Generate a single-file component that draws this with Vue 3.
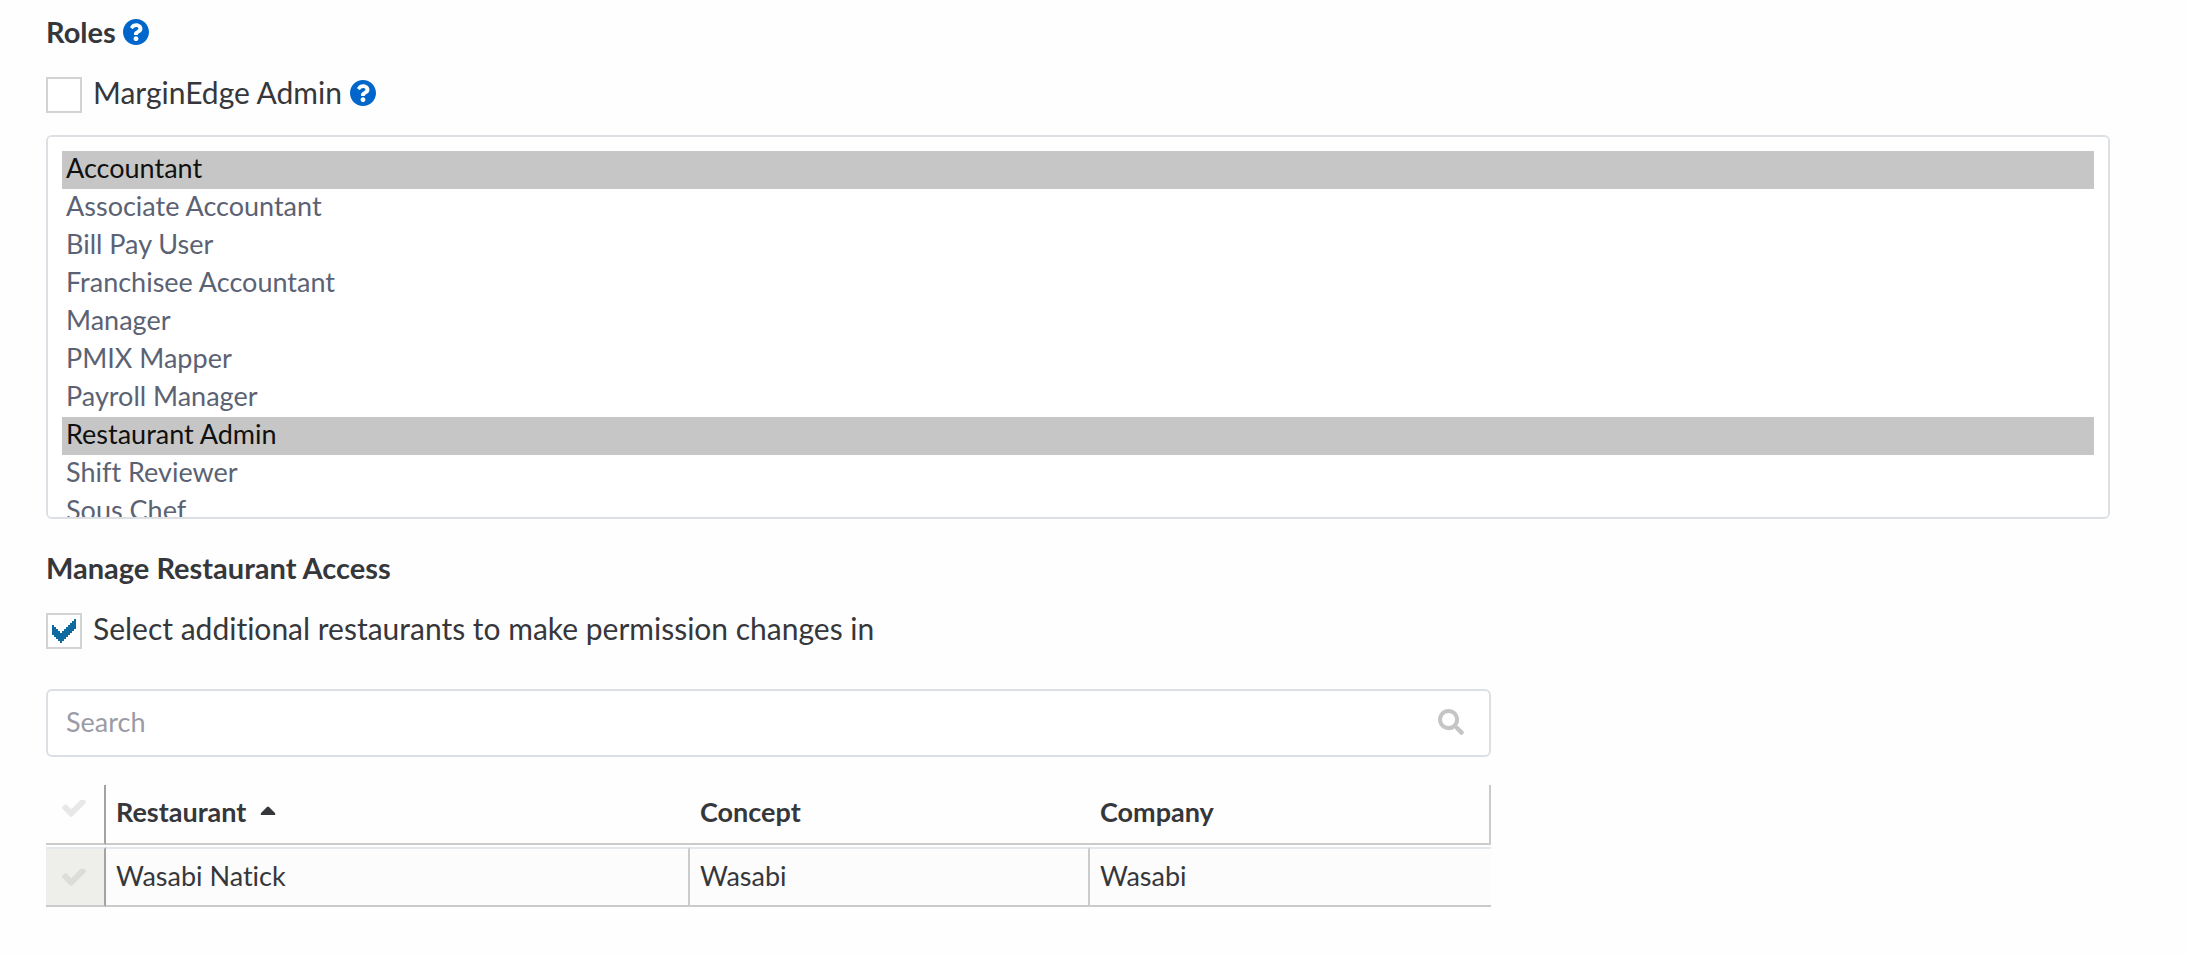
<script setup>
import { ref } from 'vue'

const roles = [
  'Accountant',
  'Associate Accountant',
  'Bill Pay User',
  'Franchisee Accountant',
  'Manager',
  'PMIX Mapper',
  'Payroll Manager',
  'Restaurant Admin',
  'Shift Reviewer',
  'Sous Chef',
]
const selectedRoles = ref(['Accountant', 'Restaurant Admin'])
const isAdmin = ref(false)
const selectAdditional = ref(true)
const search = ref('')
const restaurants = [{ name: 'Wasabi Natick', concept: 'Wasabi', company: 'Wasabi' }]

const questionPath =
  'M504 256c0 136.997-111.043 248-248 248S8 392.997 8 256C8 119.083 119.043 8 256 8s248 111.083 248 248zM262.655 90c-54.497 0-89.255 22.957-116.549 63.758-3.536 5.286-2.353 12.415 2.715 16.258l34.699 26.31c5.205 3.947 12.621 3.008 16.665-2.122 17.864-22.658 30.113-35.797 57.303-35.797 20.429 0 45.698 13.148 45.698 32.958 0 14.976-12.363 22.667-32.534 33.976C247.128 238.528 216 254.941 216 296v4c0 6.627 5.373 12 12 12h56c6.627 0 12-5.373 12-12v-1.333c0-28.462 83.186-29.647 83.186-106.667 0-58.002-60.165-102-116.531-102zM256 338c-25.365 0-46 20.635-46 46 0 25.364 20.635 46 46 46s46-20.636 46-46c0-25.365-20.635-46-46-46z'
const checkPath =
  'M1671 566q0 40-28 68l-724 724-136 136q-28 28-68 28t-68-28l-136-136-362-362q-28-28-28-68t28-68l136-136q28-28 68-28t68 28l294 295 656-657q28-28 68-28t68 28l136 136q28 28 28 68z'
const tickPath =
  'M0 6H2V8H4V10H6V12H8V14H10V12H12V10H14V8H16V6H18V4H20V2H22V0H24V10H22V12H20V14H18V16H16V18H14V20H12V22H10V24H8V22H6V20H4V18H2V16H0Z'
</script>

<template>
  <main class="page">
    <h2 id="roles-title" class="heading">
      Roles
      <button class="help" type="button" aria-label="About roles">
        <svg viewBox="8 8 496 496"><path :d="questionPath" /></svg>
      </button>
    </h2>

    <div class="option-row">
      <span class="box">
        <input id="admin" v-model="isAdmin" type="checkbox" />
        <svg v-if="isAdmin" class="tick" viewBox="0 0 24 24"><path :d="tickPath" /></svg>
      </span>
      <label for="admin">MarginEdge Admin</label>
      <button class="help" type="button" aria-label="About MarginEdge Admin">
        <svg viewBox="8 8 496 496"><path :d="questionPath" /></svg>
      </button>
    </div>

    <select v-model="selectedRoles" class="roles" multiple aria-labelledby="roles-title">
      <option v-for="role in roles" :key="role" :value="role">{{ role }}</option>
    </select>

    <h2 class="heading">Manage Restaurant Access</h2>

    <div class="option-row">
      <span class="box">
        <input id="additional" v-model="selectAdditional" type="checkbox" />
        <svg v-if="selectAdditional" class="tick" viewBox="0 0 24 24"><path :d="tickPath" /></svg>
      </span>
      <label for="additional">Select additional restaurants to make permission changes in</label>
    </div>

    <section class="picker">
      <div class="search">
        <input v-model="search" type="text" placeholder="Search" aria-label="Search" />
        <svg viewBox="0 0 512 512">
          <path d="M505 442.7L405.3 343c-4.5-4.5-10.6-7-17-7H372c27.6-35.3 44-79.7 44-128C416 93.1 322.9 0 208 0S0 93.1 0 208s93.1 208 208 208c48.3 0 92.7-16.4 128-44v16.3c0 6.4 2.5 12.5 7 17l99.7 99.7c9.4 9.4 24.6 9.4 33.9 0l28.3-28.3c9.4-9.4 9.4-24.6.1-34zM208 336c-70.7 0-128-57.2-128-128 0-70.7 57.2-128 128-128 70.7 0 128 57.2 128 128 0 70.7-57.2 128-128 128z" />
        </svg>
      </div>

      <table class="grid">
        <colgroup>
          <col class="col-check" />
          <col class="col-name" />
          <col class="col-concept" />
          <col />
        </colgroup>
        <thead>
          <tr>
            <th class="check">
              <label class="mark">
                <input type="checkbox" aria-label="Select all restaurants" />
                <svg viewBox="121 434 1550 1088"><path :d="checkPath" /></svg>
              </label>
            </th>
            <th scope="col">
              <button class="sort" type="button">
                Restaurant
                <svg viewBox="0 0 16 10"><path d="M7 1Q8 0 9 1L15 7Q16 9 14 9H2Q0 9 1 7Z" /></svg>
              </button>
            </th>
            <th scope="col">Concept</th>
            <th scope="col">Company</th>
          </tr>
        </thead>
        <tbody>
          <tr v-for="row in restaurants" :key="row.name">
            <td class="check">
              <label class="mark">
                <input type="checkbox" :aria-label="'Select ' + row.name" />
                <svg viewBox="121 434 1550 1088"><path :d="checkPath" /></svg>
              </label>
            </td>
            <td>{{ row.name }}</td>
            <td>{{ row.concept }}</td>
            <td>{{ row.company }}</td>
          </tr>
        </tbody>
      </table>
    </section>
  </main>
</template>

<style>
body {
  background: #fefefe;
}
</style>

<style scoped>
.page {
  padding: 12px 76px 40px 46px;
  font-family: Lato, "Open Sans", sans-serif;
  font-size: 30px;
  font-variant-ligatures: none;
  color: #36373b;
}
.page * {
  box-sizing: border-box;
}
button,
input,
select {
  font: inherit;
  font-variant-ligatures: none;
  color: inherit;
  margin: 0;
}
button {
  padding: 0;
  border: 0;
  background: none;
}
svg {
  display: block;
  fill: currentColor;
}
.heading {
  display: flex;
  align-items: center;
  gap: 7px;
  margin: 0 0 25px;
  font-size: 29px;
  line-height: 40px;
  font-weight: 700;
}
.help {
  color: #0066cc;
}
.help svg {
  width: 26px;
  height: 26px;
}
.option-row {
  display: flex;
  align-items: flex-start;
  line-height: 30px;
}
.option-row label {
  margin-left: 11px;
}
.option-row .help {
  margin: 3px 0 0 8px;
}
.box {
  position: relative;
  width: 36px;
  height: 36px;
}
.box input {
  display: block;
  width: 36px;
  height: 36px;
  appearance: none;
  border: 2px solid #d3d3d3;
  background: #fff;
}
.tick {
  position: absolute;
  inset: 6px;
  width: 24px;
  height: 24px;
  color: #0f6a9f;
  pointer-events: none;
  shape-rendering: crispEdges;
}
.roles {
  display: block;
  width: 100%;
  height: 384px;
  margin: 22px 0 29px;
  padding: 14px;
  border: 2px solid #dce0e5;
  border-radius: 6px;
  outline: 0;
  background: #fff;
  color: #5b6273;
  font-size: 27px;
  scrollbar-width: none;
}
.roles option {
  padding: 0 4px 5px;
}
.roles option:checked {
  background: linear-gradient(#c6c6c6, #c6c6c6);
}
.picker {
  width: 70%;
  margin-top: 40px;
  font-size: 27px;
}
.search {
  display: flex;
  align-items: center;
  height: 68px;
  padding: 0 25px 2px 0;
  border: 2px solid #dce0e5;
  border-radius: 6px;
  background: #fff;
}
.search input {
  flex: 1;
  min-width: 0;
  height: 62px;
  padding: 0 18px 2px;
  border: 0;
  outline: 0;
  background: none;
}
.search input::placeholder {
  color: #9b9ba6;
  opacity: 1;
}
.search svg {
  width: 26px;
  height: 26px;
  color: #c5c5c5;
}
.grid {
  width: 100%;
  margin-top: 26px;
  table-layout: fixed;
  border-collapse: separate;
  border-spacing: 0 2px;
}
.col-check {
  width: 60px;
}
.col-name {
  width: 584px;
}
.col-concept {
  width: 400px;
}
th,
td {
  height: 60px;
  padding: 0 10px 4px;
  border-bottom: 2px solid #cbcbcb;
  text-align: left;
  vertical-align: middle;
}
th {
  padding-bottom: 6px;
  font-weight: 700;
}
th:last-child {
  border-right: 2px solid #cbcbcb;
}
td {
  border-top: 2px solid #e3e8ed;
  border-right: 2px solid #cbcbcb;
  background: #fcfcfc;
}
td:last-child {
  border-right: 0;
}
.check {
  padding: 0;
  border-right: 2px solid #a3a3a3;
}
th.check {
  padding-bottom: 12px;
}
td.check {
  background: #eeeeea;
}
.mark {
  display: flex;
  justify-content: center;
  padding-right: 2px;
  color: #e8e8e8;
}
td .mark {
  color: #dcdcda;
}
.mark input {
  position: absolute;
  opacity: 0;
}
.mark svg {
  width: 24px;
  height: 17px;
}
.sort {
  display: flex;
  align-items: center;
  gap: 14px;
  font-weight: 700;
}
.sort svg {
  width: 16px;
  height: 10px;
}
</style>
